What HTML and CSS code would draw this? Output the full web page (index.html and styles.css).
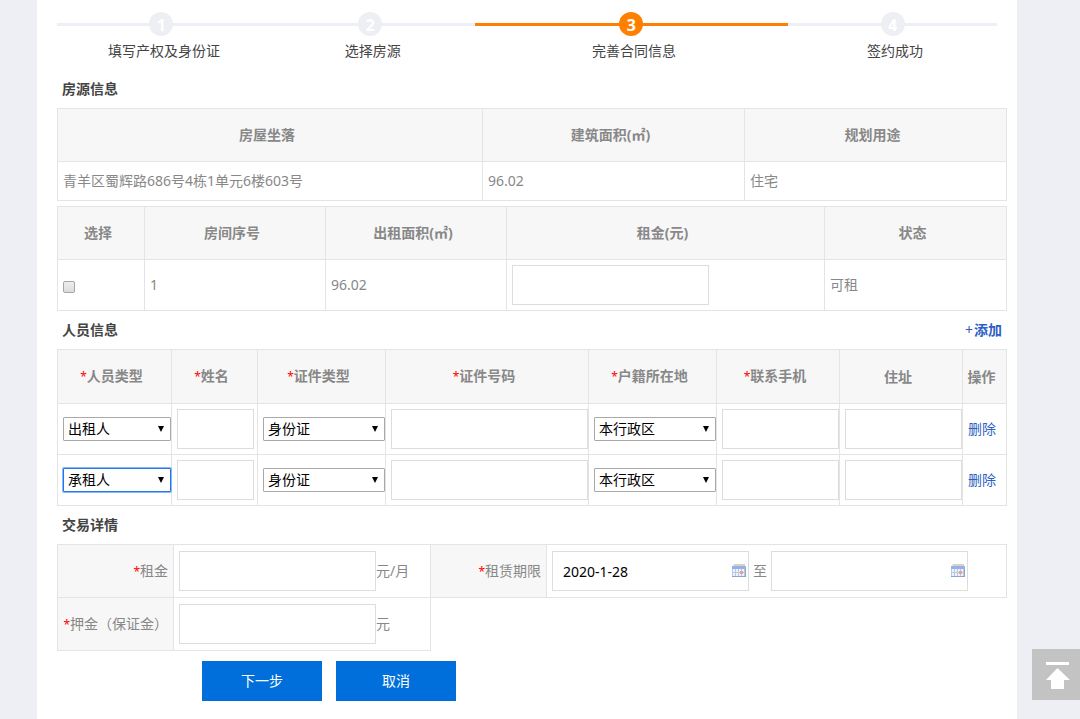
FILE: index.html
```
<!DOCTYPE html>
<html lang="zh-CN">
<head>
  <meta charset="UTF-8">
  <title>完善合同信息</title>
  <link rel="stylesheet" href="styles.css">
</head>
<body>
  <div class="wrap">
    <ol class="steps">
      <li><b>1</b><span>填写产权及身份证</span></li>
      <li><b>2</b><span>选择房源</span></li>
      <li class="on"><b>3</b><span>完善合同信息</span></li>
      <li><b>4</b><span>签约成功</span></li>
    </ol>

    <form>
      <div class="title"><h2>房源信息</h2></div>
      <table class="house">
        <colgroup><col class="w425"><col class="w262"><col class="w262"></colgroup>
        <tr><th>房屋坐落</th><th>建筑面积(㎡)</th><th>规划用途</th></tr>
        <tr class="short"><td>青羊区蜀辉路686号4栋1单元6楼603号</td><td>96.02</td><td>住宅</td></tr>
      </table>

      <table class="room">
        <colgroup><col class="w87"><col class="w181"><col class="w181"><col class="w318"><col class="w182"></colgroup>
        <tr><th>选择</th><th>房间序号</th><th>出租面积(㎡)</th><th>租金(元)</th><th>状态</th></tr>
        <tr>
          <td><input type="checkbox" aria-label="选择房间1"></td>
          <td>1</td>
          <td>96.02</td>
          <td><input type="text" class="txt" aria-label="租金(元)"></td>
          <td>可租</td>
        </tr>
      </table>

      <div class="title"><h2>人员信息</h2><a href="#" class="add">+<b>添加</b></a></div>
      <table class="people">
        <colgroup><col class="w114"><col class="w86"><col class="w128"><col class="w203"><col class="w128"><col class="w123"><col class="w123"><col class="w44"></colgroup>
        <tr>
          <th><i>*</i>人员类型</th>
          <th><i>*</i>姓名</th>
          <th><i>*</i>证件类型</th>
          <th><i>*</i>证件号码</th>
          <th><i>*</i>户籍所在地</th>
          <th><i>*</i>联系手机</th>
          <th>住址</th>
          <th>操作</th>
        </tr>
        <tr>
          <td><span class="sel"><select aria-label="人员类型"><option selected>出租人</option><option>承租人</option></select></span></td>
          <td><input type="text" class="txt name" aria-label="姓名"></td>
          <td><span class="sel"><select aria-label="证件类型"><option>身份证</option></select></span></td>
          <td><input type="text" class="txt" aria-label="证件号码"></td>
          <td><span class="sel"><select aria-label="户籍所在地"><option>本行政区</option></select></span></td>
          <td><input type="text" class="txt" aria-label="联系手机"></td>
          <td><input type="text" class="txt" aria-label="住址"></td>
          <td><a href="#">删除</a></td>
        </tr>
        <tr>
          <td><span class="sel"><select class="active" aria-label="人员类型"><option>出租人</option><option selected>承租人</option></select></span></td>
          <td><input type="text" class="txt name" aria-label="姓名"></td>
          <td><span class="sel"><select aria-label="证件类型"><option>身份证</option></select></span></td>
          <td><input type="text" class="txt" aria-label="证件号码"></td>
          <td><span class="sel"><select aria-label="户籍所在地"><option>本行政区</option></select></span></td>
          <td><input type="text" class="txt" aria-label="联系手机"></td>
          <td><input type="text" class="txt" aria-label="住址"></td>
          <td><a href="#">删除</a></td>
        </tr>
      </table>

      <div class="title"><h2>交易详情</h2></div>
      <table class="deal">
        <colgroup><col class="w116"><col class="w257"><col class="w116"><col class="w460"></colgroup>
        <tr>
          <td class="lab"><label for="rent"><i>*</i>租金</label></td>
          <td><div class="line"><input type="text" class="txt" id="rent">元/月</div></td>
          <td class="lab"><label for="start"><i>*</i>租赁期限</label></td>
          <td>
            <div class="line period">
              <span class="date">
                <input type="text" class="txt" id="start" value="2020-1-28">
                <svg width="14" height="14" viewBox="0 0 14 14">
                  <path d="M1 2L2 0H13V2Z" fill="#d5d1cb"/>
                  <path d="M0 2H14V13H0Z" fill="#b9c8e6"/>
                  <path d="M0 2H14V5H0Z" fill="#94b2e8"/>
                  <path d="M1 5H3V8H1ZM4 5H6V8H4ZM7 5H9V8H7ZM10 5H12V8H10ZM1 9H3V12H1ZM4 9H6V12H4ZM7 9H9V12H7ZM10 9H12V12H10Z" fill="#edf1f9"/>
                  <path d="M8 7H11V10H8Z" fill="#ef9d8d"/>
                  <path d="M13 5H14V13H0V12H13Z" fill="#8ea4c4"/>
                </svg>
              </span>
              <label for="end">至</label>
              <span class="date">
                <input type="text" class="txt" id="end">
                <svg width="14" height="14" viewBox="0 0 14 14">
                  <path d="M1 2L2 0H13V2Z" fill="#d5d1cb"/>
                  <path d="M0 2H14V13H0Z" fill="#b9c8e6"/>
                  <path d="M0 2H14V5H0Z" fill="#94b2e8"/>
                  <path d="M1 5H3V8H1ZM4 5H6V8H4ZM7 5H9V8H7ZM10 5H12V8H10ZM1 9H3V12H1ZM4 9H6V12H4ZM7 9H9V12H7ZM10 9H12V12H10Z" fill="#edf1f9"/>
                  <path d="M8 7H11V10H8Z" fill="#ef9d8d"/>
                  <path d="M13 5H14V13H0V12H13Z" fill="#8ea4c4"/>
                </svg>
              </span>
            </div>
          </td>
        </tr>
        <tr>
          <td class="lab"><label for="deposit"><i>*</i>押金（保证金）</label></td>
          <td><div class="line"><input type="text" class="txt" id="deposit">元</div></td>
        </tr>
      </table>

      <div class="btns">
        <button type="button">下一步</button>
        <button type="button">取消</button>
      </div>
    </form>
  </div>

  <a href="#" class="gotop" aria-label="返回顶部">
    <svg width="48" height="51" viewBox="0 0 48 51">
      <path d="M14 13H37V16H14ZM25.5 19L38 31H32V40H19V31H14Z" fill="#fff"/>
    </svg>
  </a>
</body>
</html>
```

FILE: styles.css
```
* {
  box-sizing: border-box;
}
body {
  margin: 0;
  background-color: #eeeff4;
  font-family: "Noto Sans", "Noto Sans CJK SC", sans-serif;
  font-size: 14px;
  line-height: 20px;
  color: #888;
}
a {
  color: #2d5fc4;
  text-decoration: none;
}
i {
  color: #f00;
  font-size: 12px;
  font-style: normal;
  font-weight: normal;
}
.wrap {
  max-width: 980px;
  min-height: 100vh;
  margin-left: 37px;
  padding: 0 10px 18px 20px;
  background-color: #fff;
}

/* steps */
.steps {
  display: flex;
  height: 70px;
  margin: 0 10px 0 0;
  padding: 12px 0 0;
  list-style: none;
  color: #444;
}
.steps li {
  flex: 2;
  display: flex;
  flex-direction: column;
  align-items: center;
  background: linear-gradient(#eeeff4, #eeeff4) 0 11px / 100% 3px no-repeat;
}
.steps b {
  width: 24px;
  height: 24px;
  border-radius: 50%;
  background-color: #eeeff4;
  color: #fff;
  font-size: 16px;
  line-height: 26px;
  text-align: center;
}
.steps span {
  padding: 5px 0 0 5px;
}
.steps .on {
  flex: 3;
  background-image: linear-gradient(#ff8000, #ff8000);
}
.steps .on b {
  background-color: #ff8000;
}

.title {
  display: flex;
  justify-content: space-between;
  padding: 0 5px;
  line-height: 38px;
}
.title h2 {
  margin: 0;
  font-size: 14px;
  color: #444;
}
.add {
  display: flex;
  gap: 1px;
}

/* tables */
table {
  width: 100%;
  table-layout: fixed;
  border-collapse: collapse;
}
th,
td {
  height: 51px;
  padding: 0 0 0 5px;
  border: 1px solid #e4e4e4;
  text-align: left;
}
th {
  height: 53px;
  padding: 0 6px 0 0;
  background-color: #f7f7f7;
  text-align: center;
}
.short td {
  height: 39px;
}
.people th {
  height: 54px;
}
.deal td {
  height: 53px;
}
.deal .lab {
  padding: 0 5px 0 0;
  background-color: #f7f7f7;
  text-align: right;
}
.room {
  margin-top: 5px;
}
.w44 { width: 44px; }
.w86 { width: 86px; }
.w87 { width: 87px; }
.w114 { width: 114px; }
.w116 { width: 116px; }
.w123 { width: 123px; }
.w128 { width: 128px; }
.w181 { width: 181px; }
.w182 { width: 182px; }
.w203 { width: 203px; }
.w257 { width: 257px; }
.w262 { width: 262px; }
.w318 { width: 318px; }
.w425 { width: 425px; }
.w460 { width: 460px; }

/* controls */
.txt {
  display: block;
  width: 197px;
  max-width: 100%;
  height: 40px;
  padding: 0 10px;
  border: 1px solid #ddd;
  background-color: #fff;
  font: inherit;
  color: #000;
}
.name {
  width: 77px;
}
.sel {
  display: block;
  position: relative;
}
.sel::after {
  content: "";
  position: absolute;
  top: 9px;
  right: 7px;
  border: 3px solid transparent;
  border-top: 6px solid #000;
  border-bottom: 0;
  pointer-events: none;
}
select {
  display: block;
  appearance: none;
  width: 100%;
  height: 24px;
  padding: 0 4px;
  border: 1px solid #a9a9a9;
  border-radius: 1px;
  background-color: #fff;
  font: inherit;
  color: #000;
}
select.active {
  border-color: #2277e8;
  box-shadow: 0 0 0 1px #8ab8f8;
}
input[type="checkbox"] {
  appearance: none;
  display: block;
  width: 12px;
  height: 12px;
  margin: 4px 0 0;
  border: 1px solid #a6a6a6;
  border-radius: 2px;
  background: linear-gradient(#eee, #dcdcdc);
}
.line {
  display: flex;
  align-items: center;
}
.period {
  gap: 4px;
}
.date {
  position: relative;
}
.date svg {
  position: absolute;
  top: 13px;
  right: 3px;
}

.btns {
  display: flex;
  gap: 14px;
  padding: 10px 0 0 145px;
}
.btns button {
  width: 120px;
  height: 40px;
  border: 0;
  background-color: #006fdc;
  font: inherit;
  color: #fff;
  cursor: pointer;
}

.gotop {
  position: fixed;
  right: 0;
  bottom: 19px;
  background-color: #c3c3c3;
}
.gotop svg {
  display: block;
}
```
